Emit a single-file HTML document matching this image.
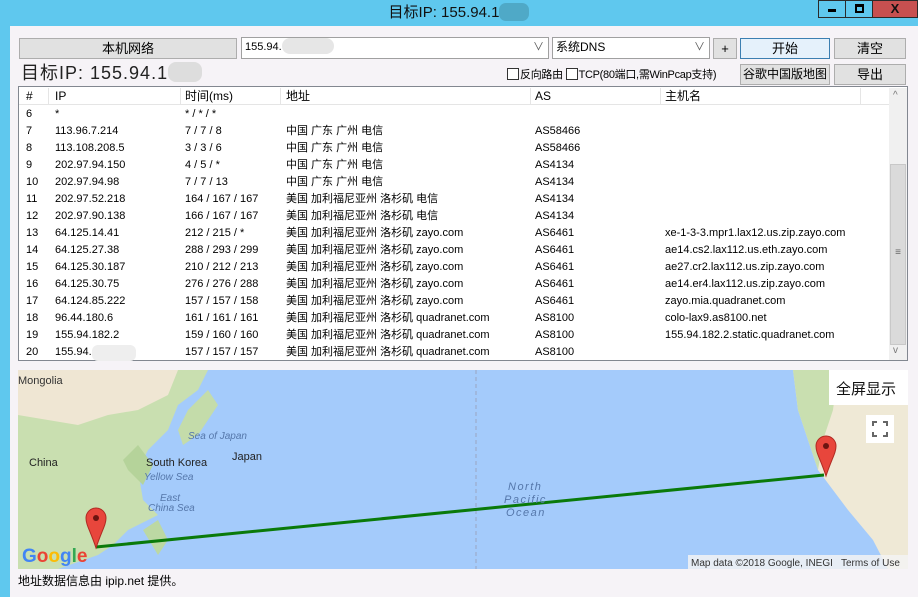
<!DOCTYPE html>
<html><head><meta charset="utf-8"><style>
*{margin:0;padding:0;box-sizing:border-box}
body{width:918px;height:597px;overflow:hidden;background:#5fc8ee;font-family:"Liberation Sans","Noto Sans CJK SC",sans-serif;font-size:12px;color:#000;position:relative}
.a{position:absolute}
.win{left:10px;top:26px;width:908px;height:571px;background:#f6f3f7}
.btn{position:absolute;background:#e1e1e1;border:1px solid #adadad;text-align:center;font-size:13px;line-height:19px}
.in{position:absolute;background:#fff;border:1px solid #a0a0a0;font-size:11px;line-height:19px;padding-left:3px}
.row{position:absolute;left:26px;height:17px;line-height:17px;font-size:11px;white-space:nowrap}
.row span{position:absolute;top:0}
.cb{display:inline-block;width:12px;height:12px;border:1px solid #333;background:#fff;vertical-align:-2px;margin-right:1px}
</style></head><body>
<div class="a" style="left:0;top:0;width:918px;height:26px;text-align:center;font-size:15px;line-height:26px;color:#111">目标IP: 155.94.1<span style="display:inline-block;width:30px;height:18px;background:#4fa9c7;vertical-align:-4px;border-radius:7px"></span></div>
<div class="a" style="left:818px;top:0;width:28px;height:18px;border:1px solid #2a2a2a;background:#5fc8ee"><div class="a" style="left:9px;top:8px;width:8px;height:3px;background:#000"></div></div>
<div class="a" style="left:845px;top:0;width:28px;height:18px;border:1px solid #2a2a2a;background:#5fc8ee"><div class="a" style="left:9px;top:3px;width:9px;height:9px;border:2px solid #000;border-top-width:3px"></div></div>
<div class="a" style="left:872px;top:0;width:46px;height:18px;background:#c75050;border:1px solid #2a2a2a;color:#111;font-weight:bold;text-align:center;line-height:16px;font-size:13px">X</div>
<div class="a win"></div>
<div class="btn" style="left:19px;top:38px;width:218px;height:21px">本机网络</div>
<div class="in" style="left:241px;top:37px;width:308px;height:22px">155.94.<span style="display:inline-block;width:52px;height:16px;background:#e6e6e6;border-radius:8px;vertical-align:-4px"></span><span style="position:absolute;right:4px;top:0;color:#555">∨</span></div>
<div class="in" style="left:552px;top:37px;width:158px;height:22px;font-size:12px">系统DNS<span style="position:absolute;right:4px;top:0;color:#555;font-size:11px">∨</span></div>
<div class="btn" style="left:713px;top:38px;width:24px;height:21px">+</div>
<div class="btn" style="left:740px;top:38px;width:90px;height:21px;border-color:#3c7fb1;background:#e5f1fb">开始</div>
<div class="btn" style="left:834px;top:38px;width:72px;height:21px">清空</div>
<div class="a" style="left:21px;top:62px;font-size:18px;line-height:22px;color:#222;letter-spacing:1px">目标IP: 155.94.1<span style="display:inline-block;width:34px;height:20px;background:#ddd;border-radius:8px;vertical-align:-3px"></span></div>
<div class="a" style="left:507px;top:66px;font-size:11px;letter-spacing:-0.3px;white-space:nowrap"><span class="cb"></span>反向路由 <span class="cb"></span>TCP(80端口,需WinPcap支持)</div>
<div class="btn" style="left:740px;top:64px;width:90px;height:21px;font-size:12px">谷歌中国版地图</div>
<div class="btn" style="left:834px;top:64px;width:72px;height:21px">导出</div>
<div class="a" style="left:18px;top:86px;width:890px;height:275px;background:#fff;border:1px solid #828790"></div>
<div class="a" style="left:19px;top:87px;width:870px;height:18px;border-bottom:1px solid #e5e5e5"></div>
<div class="a" style="left:48px;top:88px;height:16px;border-left:1px solid #e5e5e5"></div>
<div class="a" style="left:180px;top:88px;height:16px;border-left:1px solid #e5e5e5"></div>
<div class="a" style="left:280px;top:88px;height:16px;border-left:1px solid #e5e5e5"></div>
<div class="a" style="left:530px;top:88px;height:16px;border-left:1px solid #e5e5e5"></div>
<div class="a" style="left:660px;top:88px;height:16px;border-left:1px solid #e5e5e5"></div>
<div class="a" style="left:860px;top:88px;height:16px;border-left:1px solid #e5e5e5"></div>
<div class="row" style="top:88px;font-size:12px"><span style="left:0">#</span><span style="left:29px">IP</span><span style="left:159px">时间(ms)</span><span style="left:260px">地址</span><span style="left:509px">AS</span><span style="left:639px">主机名</span></div>
<div class="a" style="left:889px;top:88px;width:18px;height:272px;background:#f0f0f0"></div>
<div class="a" style="left:890px;top:164px;width:16px;height:181px;background:#dadada;border:1px solid #c8c8c8;text-align:center;line-height:175px;color:#666;font-size:10px">≡</div>
<div class="a" style="left:893px;top:90px;color:#777;font-size:10px">^</div>
<div class="a" style="left:893px;top:345px;color:#777;font-size:10px">v</div>
<div id="rows"></div>
<script>
var d=[["6","*","* / * / *","","",""],["7","113.96.7.214","7 / 7 / 8","中国 广东 广州 电信","AS58466",""],["8","113.108.208.5","3 / 3 / 6","中国 广东 广州 电信","AS58466",""],["9","202.97.94.150","4 / 5 / *","中国 广东 广州 电信","AS4134",""],["10","202.97.94.98","7 / 7 / 13","中国 广东 广州 电信","AS4134",""],["11","202.97.52.218","164 / 167 / 167","美国 加利福尼亚州 洛杉矶 电信","AS4134",""],["12","202.97.90.138","166 / 167 / 167","美国 加利福尼亚州 洛杉矶 电信","AS4134",""],["13","64.125.14.41","212 / 215 / *","美国 加利福尼亚州 洛杉矶 zayo.com","AS6461","xe-1-3-3.mpr1.lax12.us.zip.zayo.com"],["14","64.125.27.38","288 / 293 / 299","美国 加利福尼亚州 洛杉矶 zayo.com","AS6461","ae14.cs2.lax112.us.eth.zayo.com"],["15","64.125.30.187","210 / 212 / 213","美国 加利福尼亚州 洛杉矶 zayo.com","AS6461","ae27.cr2.lax112.us.zip.zayo.com"],["16","64.125.30.75","276 / 276 / 288","美国 加利福尼亚州 洛杉矶 zayo.com","AS6461","ae14.er4.lax112.us.zip.zayo.com"],["17","64.124.85.222","157 / 157 / 158","美国 加利福尼亚州 洛杉矶 zayo.com","AS6461","zayo.mia.quadranet.com"],["18","96.44.180.6","161 / 161 / 161","美国 加利福尼亚州 洛杉矶 quadranet.com","AS8100","colo-lax9.as8100.net"],["19","155.94.182.2","159 / 160 / 160","美国 加利福尼亚州 洛杉矶 quadranet.com","AS8100","155.94.182.2.static.quadranet.com"],["20","155.94.","157 / 157 / 157","美国 加利福尼亚州 洛杉矶 quadranet.com","AS8100",""]];
var h="",L=[0,29,159,260,509,639];
d.forEach(function(r,i){h+='<div class="row" style="top:'+(106+i*17)+'px">';r.forEach(function(c,j){h+='<span style="left:'+L[j]+'px">'+c+'</span>'});h+='</div>'});
document.getElementById("rows").innerHTML=h;
</script>
<div class="a" style="left:92px;top:345px;width:44px;height:16px;background:#eee;border-radius:6px"></div>
<svg class="a" style="left:18px;top:370px" width="890" height="199" viewBox="0 0 890 199">
<rect width="890" height="199" fill="#a4cbfb"/>
<path d="M0 0H190L180 20 160 35 150 60 130 80 120 100 125 130 140 145 110 160 95 175 80 185 40 199H0Z" fill="#c9dfb0"/>
<path d="M0 0H160L150 25 120 40 90 45 60 55 30 50 0 45Z" fill="#efe6d3"/>
<path d="M105 90 120 75 135 95 125 115 110 100Z" fill="#b5d39a"/>
<path d="M160 60 170 40 190 20 200 35 180 65 165 75Z" fill="#c4dcaa"/>
<path d="M125 160 140 150 150 170 140 185Z" fill="#bcd8a3"/>
<path d="M775 0H890V199H870L855 170 830 140 815 120 800 100 790 70 780 40Z" fill="#efe9d6"/>
<path d="M775 0H820L815 40 805 70 800 100 790 70 780 40Z" fill="#c9dfb0"/>
<path d="M458 0V199" stroke="#9aa6c0" stroke-dasharray="4 3"/>
<line x1="78" y1="177" x2="806" y2="105" stroke="#0a7a0a" stroke-width="3"/>
<text x="0" y="14" font-size="11" font-family="Liberation Sans" fill="#333">Mongolia</text>
<text x="11" y="96" font-size="11" font-family="Liberation Sans" fill="#222">China</text>
<text x="128" y="96" font-size="11" font-family="Liberation Sans" fill="#222">South Korea</text>
<text x="214" y="90" font-size="11" font-family="Liberation Sans" fill="#222">Japan</text>
<text x="170" y="69" font-size="10" font-style="italic" font-family="Liberation Sans" fill="#5577aa">Sea of Japan</text>
<text x="126" y="110" font-size="10" font-style="italic" font-family="Liberation Sans" fill="#5577aa">Yellow Sea</text>
<text x="142" y="131" font-size="10" font-style="italic" font-family="Liberation Sans" fill="#5577aa">East</text>
<text x="130" y="141" font-size="10" font-style="italic" font-family="Liberation Sans" fill="#5577aa">China Sea</text>
<text x="490" y="120" font-size="11" font-style="italic" letter-spacing="1.5" font-family="Liberation Sans" fill="#5577aa">North</text>
<text x="486" y="133" font-size="11" font-style="italic" letter-spacing="1.5" font-family="Liberation Sans" fill="#5577aa">Pacific</text>
<text x="488" y="146" font-size="11" font-style="italic" letter-spacing="1.5" font-family="Liberation Sans" fill="#5577aa">Ocean</text>
<path d="M78 178 C72 160 68 155 68 148 A10 10 0 0 1 88 148 C88 155 84 160 78 178Z" fill="#e8463c" stroke="#b02a22"/><circle cx="78" cy="148" r="3" fill="#6b1410"/>
<path d="M808 106 C802 88 798 83 798 76 A10 10 0 0 1 818 76 C818 83 814 88 808 106Z" fill="#e8463c" stroke="#b02a22"/><circle cx="808" cy="76" r="3" fill="#6b1410"/>
<text x="4" y="192" font-size="19" font-weight="bold" font-family="Liberation Sans"><tspan fill="#4285f4">G</tspan><tspan fill="#ea4335">o</tspan><tspan fill="#fbbc05">o</tspan><tspan fill="#4285f4">g</tspan><tspan fill="#34a853">l</tspan><tspan fill="#ea4335">e</tspan></text>
<rect x="670" y="185" width="220" height="14" fill="#f3f3f3" opacity="0.85"/>
<text x="673" y="196" font-size="10" font-family="Liberation Sans" fill="#333">Map data ©2018 Google, INEGI</text>
<text x="823" y="196" font-size="10" font-family="Liberation Sans" fill="#333">Terms of Use</text>
<rect x="811" y="0" width="79" height="35" fill="#fff"/>
<text x="818" y="24" font-size="15" font-family="Noto Sans CJK SC" fill="#111">全屏显示</text>
<rect x="848" y="45" width="28" height="28" fill="#fff"/>
<path d="M855 56v-4h4M869 56v-4h-4M855 62v4h4M869 62v4h-4" stroke="#666" stroke-width="2" fill="none"/>
</svg>
<div class="a" style="left:18px;top:572px;font-size:12px">地址数据信息由 ipip.net 提供。</div>
</body></html>
